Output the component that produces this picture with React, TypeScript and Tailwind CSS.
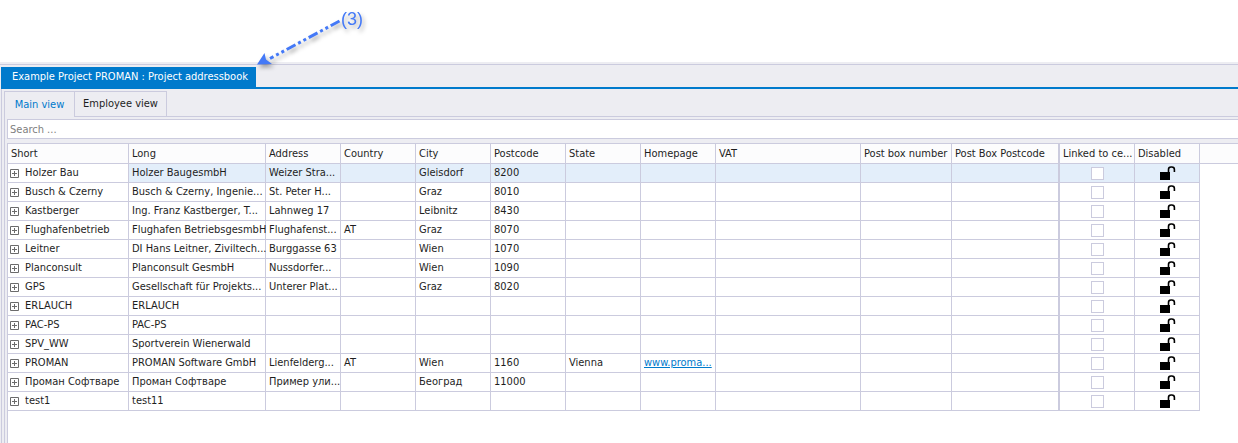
import { useState } from 'react';

interface Row {
  short: string;
  long: string;
  address?: string;
  country?: string;
  city?: string;
  postcode?: string;
  state?: string;
  homepage?: string;
}

const COLUMNS = [
  { label: 'Short', width: 'w-[121px]' },
  { label: 'Long', width: 'w-[137px]' },
  { label: 'Address', width: 'w-[75px]' },
  { label: 'Country', width: 'w-[75px]' },
  { label: 'City', width: 'w-[75px]' },
  { label: 'Postcode', width: 'w-[75px]' },
  { label: 'State', width: 'w-[75px]' },
  { label: 'Homepage', width: 'w-[75px]' },
  { label: 'VAT', width: 'w-[145px]' },
  { label: 'Post box number', width: 'w-[91px]' },
  { label: 'Post Box Postcode', width: 'w-[108px]', split: true },
  { label: 'Linked to ce...', width: 'w-[75px]' },
  { label: 'Disabled', width: 'w-[65px]' },
];

const ROWS: Row[] = [
  { short: 'Holzer Bau', long: 'Holzer BaugesmbH', address: 'Weizer Stra...', city: 'Gleisdorf', postcode: '8200' },
  { short: 'Busch & Czerny', long: 'Busch & Czerny, Ingenie...', address: 'St. Peter H...', city: 'Graz', postcode: '8010' },
  { short: 'Kastberger', long: 'Ing. Franz Kastberger, T...', address: 'Lahnweg 17', city: 'Leibnitz', postcode: '8430' },
  { short: 'Flughafenbetrieb', long: 'Flughafen BetriebsgesmbH', address: 'Flughafenst...', country: 'AT', city: 'Graz', postcode: '8070' },
  { short: 'Leitner', long: 'DI Hans Leitner, Ziviltech...', address: 'Burggasse 63', city: 'Wien', postcode: '1070' },
  { short: 'Planconsult', long: 'Planconsult GesmbH', address: 'Nussdorfer...', city: 'Wien', postcode: '1090' },
  { short: 'GPS', long: 'Gesellschaft für Projekts...', address: 'Unterer Plat...', city: 'Graz', postcode: '8020' },
  { short: 'ERLAUCH', long: 'ERLAUCH' },
  { short: 'PAC-PS', long: 'PAC-PS' },
  { short: 'SPV_WW', long: 'Sportverein Wienerwald' },
  { short: 'PROMAN', long: 'PROMAN Software GmbH', address: 'Lienfelderg...', country: 'AT', city: 'Wien', postcode: '1160', state: 'Vienna', homepage: 'www.proma...' },
  { short: 'Проман Софтваре', long: 'Проман Софтваре', address: 'Пример ули...', city: 'Београд', postcode: '11000' },
  { short: 'test1', long: 'test11' },
];

const line = 'border-r border-b border-[#cbcbde] py-0 pr-0 font-normal whitespace-nowrap';
const cell = `${line} pl-[3px]`;

function OpenLock() {
  return (
    <svg width="16" height="15" viewBox="0 0 16 15" className="mx-auto block" aria-hidden="true">
      <rect x="0" y="6" width="10" height="8" fill="#000" />
      <path d="M8.5 6V3.5C8.5 2 9.6 1 11 1h.8C13.3 1 14.4 2 14.4 3.5V6" fill="none" stroke="#000" strokeWidth="1.6" />
    </svg>
  );
}

function Callout() {
  return (
    <svg
      width="120"
      height="80"
      viewBox="0 0 120 80"
      className="absolute left-[250px] top-0 font-['Liberation_Sans',Arial,sans-serif] drop-shadow-[2px_3px_2px_rgba(0,0,0,0.35)]"
    >
      <path d="M89.500 21L20 58.500" stroke="#4479f7" strokeWidth="3" strokeDasharray="10 3 3 3 3 3" fill="none" />
      <path d="M7 64.500L14.500 53L16 59.500L22 64Z" fill="#4479f7" />
      <text x="91" y="25" fontSize="18" fill="#4479f7">(3)</text>
    </svg>
  );
}

export default function App() {
  const [view, setView] = useState('main');
  const [search, setSearch] = useState('');
  const [selected, setSelected] = useState(0);

  return (
    <div className="relative flex min-h-screen flex-col bg-white pt-[62px] font-['DejaVu_Sans_Condensed','DejaVu_Sans',sans-serif] text-[11px] leading-4 text-[#1e1e1e]">
      <Callout />

      <div className="flex grow flex-col bg-[#ededf2] pt-0.5">
        <div className="border-t border-[#cbcbde] pl-px pt-0.5">
          <div className="border-b-2 border-[#007acc]">
            <button type="button" className="block h-5 w-[255px] bg-[#007acc] pl-[11px] text-left text-white">
              Example Project PROMAN : Project addressbook
            </button>
          </div>
        </div>

        <div className="ml-px flex grow flex-col border-l border-[#cbcbde] pl-0.5 pt-0.5">
          <div className="flex" role="tablist">
            <button
              type="button"
              role="tab"
              aria-selected={view === 'main'}
              onClick={() => setView('main')}
              className="h-[26px] w-[70px] border-l border-t border-[#cbcbde] text-center text-[#007acc]"
            >
              Main view
            </button>
            <button
              type="button"
              role="tab"
              aria-selected={view === 'employee'}
              onClick={() => setView('employee')}
              className="h-[26px] w-[93px] border border-[#cbcbde] text-center"
            >
              Employee view
            </button>
            <div className="grow border-b border-[#cbcbde]" />
          </div>

          <div className="flex grow flex-col border-l border-[#cbcbde] pl-0.5 pt-0.5">
            <input
              type="text"
              aria-label="Search"
              placeholder="Search ..."
              value={search}
              onChange={(e) => setSearch(e.target.value)}
              className="h-5 border-y border-l border-[#cbcbde] bg-white px-0.5 outline-none placeholder:text-[#808080]"
            />

            <div className="mt-1 grow border-l border-t border-[#cbcbde] bg-white">
              <table className="w-full table-fixed border-separate border-spacing-0">
                <thead>
                  <tr className="h-5 bg-[#fcfcfd] text-left">
                    {COLUMNS.map((col) => (
                      <th key={col.label} className={`${cell} ${col.width} ${col.split ? 'border-r-2' : ''}`}>
                        {col.label}
                      </th>
                    ))}
                    <td className="border-b border-[#cbcbde]" />
                  </tr>
                </thead>
                <tbody>
                  {ROWS.map((row, i) => {
                    const tint = i === selected ? 'bg-[#e3eefa]' : '';
                    return (
                      <tr key={row.short} className="h-[19px]" onClick={() => setSelected(i)}>
                        <td className={`${line} pl-0.5`}>
                          <div className="flex items-center gap-1.5">
                            <button type="button" aria-label={`Expand ${row.short}`}>
                              <svg width="9" height="9" viewBox="0 0 9 9" className="block">
                                <path d="M.5.5h8v8h-8zM2 4.500h5M4.500 2v5" fill="none" stroke="#6b6b6b" />
                              </svg>
                            </button>
                            <span>{row.short}</span>
                          </div>
                        </td>
                        <td className={`${cell} ${tint}`}>{row.long}</td>
                        <td className={`${cell} ${tint}`}>{row.address}</td>
                        <td className={`${cell} ${tint}`}>{row.country}</td>
                        <td className={`${cell} ${tint}`}>{row.city}</td>
                        <td className={`${cell} ${tint}`}>{row.postcode}</td>
                        <td className={`${cell} ${tint}`}>{row.state}</td>
                        <td className={`${cell} ${tint}`}>
                          {row.homepage && (
                            <a href="#homepage" className="text-[#007acc] underline">
                              {row.homepage}
                            </a>
                          )}
                        </td>
                        <td className={`${cell} ${tint}`} />
                        <td className={`${cell} ${tint}`} />
                        <td className={`${cell} ${tint} border-r-2`} />
                        <td className={`${line} pl-px ${tint}`}>
                          <input
                            type="checkbox"
                            aria-label={`${row.short} linked`}
                            className="mx-auto block size-[13px] appearance-none border border-[#cbcbde] bg-white checked:bg-[#007acc]"
                          />
                        </td>
                        <td className={`${line} pl-px ${tint}`}>
                          <OpenLock />
                        </td>
                      </tr>
                    );
                  })}
                </tbody>
              </table>
            </div>
          </div>
        </div>
      </div>
    </div>
  );
}
